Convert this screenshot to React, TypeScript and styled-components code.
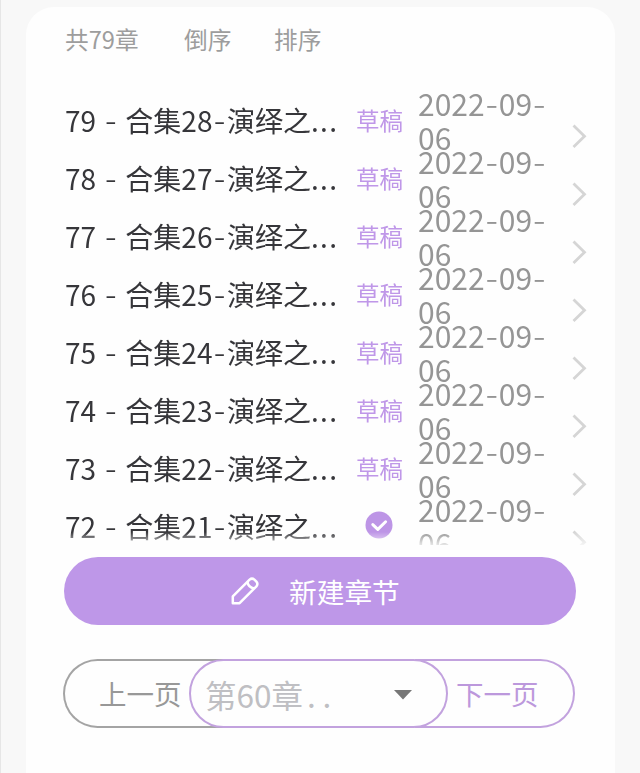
import React from "react";
import styled, { createGlobalStyle } from "styled-components";

const GlobalStyle = createGlobalStyle`
  * { box-sizing: border-box; }
  body {
    margin: 0;
    background: #f8f8f8;
    font-family: "Noto Sans CJK SC", "Noto Sans", sans-serif;
    overflow: hidden;
  }
  button { font-family: inherit; background: none; border: 0; padding: 0; margin: 0; }
`;

const Page = styled.div`
  height: 773px;
  padding: 7px 25px 0 25px;
  border-left: 1px solid #e6e6e6;
`;

const Card = styled.main`
  height: 766px;
  display: flex;
  flex-direction: column;
  padding: 0 38px;
  background: #fefefe;
  border-radius: 28px 28px 0 0;
`;

const Toolbar = styled.header`
  display: flex;
  height: 64px;
  padding-left: 1px;
`;

const ToolItem = styled.span<{ $width: number }>`
  width: ${(p) => p.$width}px;
  font-size: 23.7px;
  line-height: 64px;
  color: #9d9d9d;
  white-space: nowrap;
`;

const List = styled.section`
  height: 474px;
  padding: 15px 0 0 1px;
  margin-right: -15px;
  overflow: hidden;
  mask-image: linear-gradient(to bottom, #000 461px, transparent 478px);
`;

const Row = styled.div`
  display: grid;
  grid-template-columns: 291px 62px 154px 20px;
  align-items: center;
  height: 58.05px;
`;

const Title = styled.span`
  font-size: 28px;
  line-height: 40px;
  color: #36363a;
  white-space: nowrap;
`;

const Hyphen = styled.span<{ $pad: number }>`
  padding: 0 ${(p) => p.$pad}px;
  font-family: Inter, sans-serif;
  font-weight: 300;
  line-height: 1;
`;

const Dots = styled.span`
  letter-spacing: 1.4px;
`;

const Draft = styled.span`
  font-size: 23.5px;
  line-height: 34px;
  color: #bf97e8;
`;

const Published = styled.svg`
  display: block;
  width: 28px;
  height: 28px;
  margin: -2px 0 0 9px;
`;

const DateText = styled.time`
  width: 135px;
  font-size: 30px;
  line-height: 34px;
  color: #959595;
`;

const Chevron = styled.svg`
  display: block;
  width: 18px;
  height: 26px;
  margin: 32px 0 0 -1px;
`;

const CreateButton = styled.button`
  display: flex;
  align-items: center;
  width: 512px;
  height: 68px;
  margin-top: 12px;
  padding-left: 166px;
  gap: 29px;
  border-radius: 34px;
  background: #be97e8;
  color: #fff;
  font-size: 27.7px;
  line-height: 40px;
  flex: none;
`;

const Pager = styled.nav`
  display: flex;
  width: 512px;
  height: 69px;
  margin: 34px 0 0 -1px;
`;

const PageButton = styled.button<{ $color: string; $line: string; $side: "left" | "right" }>`
  width: 160px;
  border: 2px solid ${(p) => p.$line};
  ${(p) =>
    p.$side === "left"
      ? "border-right: 0; border-radius: 35px 0 0 35px; padding-left: 34px;"
      : "border-left: 0; border-radius: 0 35px 35px 0; padding-left: 41px;"}
  color: ${(p) => p.$color};
  font-size: 27.5px;
  line-height: 65px;
  text-align: left;
  flex: none;
  white-space: nowrap;
`;

const ChapterSelect = styled.button`
  display: flex;
  align-items: center;
  justify-content: space-between;
  width: 259px;
  margin: 0 -33px 0 -34px;
  padding: 0 34px 0 14px;
  border: 2px solid #c2a2de;
  border-radius: 35px;
  background: #fefefe;
  color: #bfbfc3;
  font-size: 31.5px;
  line-height: 44px;
  z-index: 1;
  flex: none;
`;

const WideDots = styled.span`
  letter-spacing: 6.7px;
  padding-left: 4px;
`;

const Caret = styled.svg`
  width: 18px;
  height: 10px;
  margin-top: 2px;
`;

const chapters = [79, 78, 77, 76, 75, 74, 73, 72].map((no) => ({
  no,
  part: no - 51,
  draft: no !== 72,
}));

function ChapterRow({ no, part, draft }: { no: number; part: number; draft: boolean }) {
  return (
    <Row>
      <Title>
        {no} <Hyphen $pad={2}>-</Hyphen> 合集{part}
        <Hyphen $pad={0.9}>-</Hyphen>演绎之<Dots>...</Dots>
      </Title>
      {draft ? (
        <Draft>草稿</Draft>
      ) : (
        <Published viewBox="0 0 28 28">
          <circle cx="14" cy="14" r="13.5" fill="#bd95e6" />
          <path d="M7.8 13.6l5 4.8 7.8-7.6" fill="none" stroke="#fff" strokeWidth="3" strokeLinecap="round" strokeLinejoin="round" />
        </Published>
      )}
      <DateText>
        2022<Hyphen $pad={0.3}>-</Hyphen>09<Hyphen $pad={0.3}>-</Hyphen>06
      </DateText>
      <Chevron viewBox="0 0 18 26">
        <path d="M2.5 2.5L13.5 13.2L2.5 24" fill="none" stroke="#d5d5d5" strokeWidth="2.8" />
      </Chevron>
    </Row>
  );
}

export default function App() {
  return (
    <>
      <GlobalStyle />
      <Page>
        <Card>
          <Toolbar>
            <ToolItem $width={119}>共79章</ToolItem>
            <ToolItem $width={90}>倒序</ToolItem>
            <ToolItem $width={60}>排序</ToolItem>
          </Toolbar>
          <List>
            {chapters.map((c) => (
              <ChapterRow key={c.no} {...c} />
            ))}
          </List>
          <CreateButton>
            <svg width="30" height="30" viewBox="0 0 30 30" fill="none" stroke="#fff" strokeWidth="2.5" strokeLinejoin="round">
              <path d="M2.8 27.2V20.4L19.6 3.6Q22 1.6 24.4 3.6L26.4 5.6Q28.4 8 26.4 10.4L9.6 27.2Z" />
              <path d="M17.4 5.8Q18.2 11.4 24.2 12.6" />
            </svg>
            <span>新建章节</span>
          </CreateButton>
          <Pager>
            <PageButton $color="#989898" $line="#a4a4a4" $side="left">上一页</PageButton>
            <ChapterSelect>
              <span>第60章<WideDots>..</WideDots></span>
              <Caret viewBox="0 0 18 10">
                <path d="M0 0H18L9 9.5Z" fill="#777" />
              </Caret>
            </ChapterSelect>
            <PageButton $color="#bc98dc" $line="#c2a2de" $side="right">下一页</PageButton>
          </Pager>
        </Card>
      </Page>
    </>
  );
}
